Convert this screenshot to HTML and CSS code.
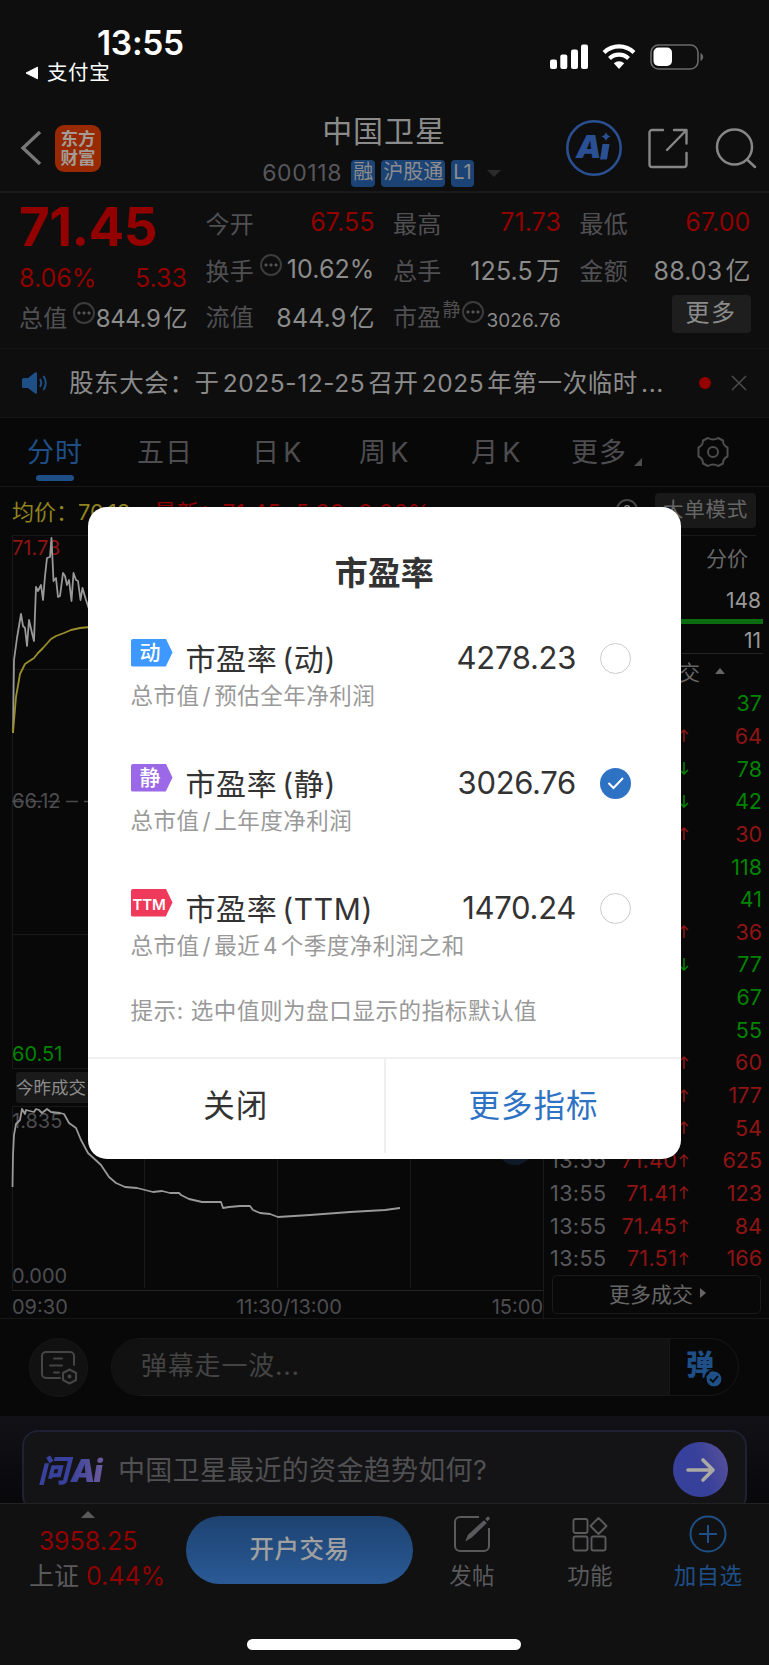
FILE: index.html
```html
<!DOCTYPE html>
<html lang="zh-CN">
<head>
    <meta charset="UTF-8">
    <meta name="viewport" content="width=device-width, initial-scale=1.0">
    <title>中国卫星 600118</title>
    <link rel="stylesheet" href="styles.css">
</head>
<body>
    <div class="phone">
        <div class="status">
            <div class="status-left">
                <div class="time">13:55</div>
                <div class="back-app">
                    <svg width="14" height="14" viewBox="0 0 14 14"><path d="M1 7 12.500 1.200v11.600z" fill="#fff" stroke="#fff" stroke-linejoin="round"/></svg>
                    <span>支付宝</span>
                </div>
            </div>
            <svg class="status-icons" width="154" height="26" viewBox="0 0 154 26">
                <g fill="#fff">
                    <rect x="0" y="15.500" width="7" height="9.500" rx="2"/>
                    <rect x="10.300" y="10.500" width="7" height="14.500" rx="2"/>
                    <rect x="21" y="5.500" width="7" height="19.500" rx="2"/>
                    <rect x="31" y="0.500" width="7" height="24.500" rx="2"/>
                    <path d="M69 25 63.800 19.300a7.500 7.500 0 0 1 10.400 0z"/>
                </g>
                <g fill="none" stroke="#fff" stroke-width="4.200">
                    <path d="M54 8.500a21.500 21.500 0 0 1 30 0"/>
                    <path d="M59.500 14.500a13.700 13.700 0 0 1 19 0"/>
                </g>
                <rect x="101" y="1" width="47" height="24" rx="7.500" fill="none" stroke="#6a6a6a" stroke-width="1.600"/>
                <rect x="103.500" y="3.500" width="18.500" height="18.500" rx="5" fill="#fff"/>
                <path d="M150.500 9v8c3.500-1.500 3.500-6.500 0-8z" fill="#6a6a6a"/>
            </svg>
        </div>

        <div class="header">
            <div class="header-left">
                <svg width="22" height="36" viewBox="0 0 22 36"><path d="M20 2 3 18l17 16" fill="none" stroke="#777" stroke-width="3.400"/></svg>
                <div class="logo"><span>东方</span><span>财富</span></div>
            </div>
            <div class="header-title">
                <div class="name">中国卫星</div>
                <div class="code">
                    <span class="num">600118</span>
                    <span class="tag">融</span>
                    <span class="tag">沪股通</span>
                    <span class="tag">L1</span>
                    <i class="down"></i>
                </div>
            </div>
            <div class="header-right">
                <svg width="56" height="56" viewBox="0 0 56 56">
                    <circle cx="28" cy="28" r="26.700" fill="none" stroke="#2a4f92" stroke-width="2.600"/>
                    <text x="10" y="38" class="ai-text">A</text>
                    <path d="M36.500 24h7l-2.500 15.500h-7zM40 12q1 3.500 4.500 4.500-3.500 1-4.500 4.500-1-3.500-4.500-4.500 3.500-1 4.500-4.500z" fill="#2a4f92"/>
                </svg>
                <svg width="41" height="41" viewBox="0 0 41 41" fill="none" stroke="#868686" stroke-width="2.400" stroke-linecap="round" stroke-linejoin="round"><path d="M15 2H4a2.500 2.500 0 0 0-2.500 2.500v32A2.500 2.500 0 0 0 4 39h32a2.500 2.500 0 0 0 2.500-2.500V25M26 2h12.500v13.500M38 2.500 19 22"/></svg>
                <svg width="42" height="42" viewBox="0 0 42 42" fill="none" stroke="#868686" stroke-width="2.500" stroke-linecap="round"><circle cx="19.500" cy="20" r="17.500"/><path d="m32 32.500 8 7.500"/></svg>
            </div>
        </div>

        <div class="quote">
            <div class="col">
                <div class="price">71.45</div>
                <div class="row change red"><span>8.06%</span><span>5.33</span></div>
                <div class="row cap"><label>总值</label><i class="dots"></i><b>844.9亿</b></div>
            </div>
            <div class="col">
                <div class="row"><label>今开</label><b class="red">67.55</b></div>
                <div class="row"><label>换手</label><i class="dots"></i><b>10.62%</b></div>
                <div class="row"><label>流值</label><b>844.9亿</b></div>
            </div>
            <div class="col">
                <div class="row"><label>最高</label><b class="red">71.73</b></div>
                <div class="row"><label>总手</label><b>125.5万</b></div>
                <div class="row pe"><label>市盈<sup>静</sup></label><i class="dots"></i><b>3026.76</b></div>
            </div>
            <div class="col">
                <div class="row"><label>最低</label><b class="red">67.00</b></div>
                <div class="row"><label>金额</label><b>88.03亿</b></div>
                <div class="row"><span class="more">更多</span></div>
            </div>
        </div>

        <div class="notice">
            <svg width="26" height="22" viewBox="0 0 26 22"><path d="M0 7.500Q0 6 1.500 6H6l7-5.500q2-1 2 1v19q0 2-2 1L6 16H1.500Q0 16 0 14.500z" fill="#1f4f87"/><path d="M18 7q2.500 4 0 8M21.500 4q4.500 7 0 14" fill="none" stroke="#1f4f87" stroke-width="2"/></svg>
            <p>股东大会：于2025-12-25召开2025年第一次临时...</p>
            <i class="red-dot"></i>
            <svg width="16" height="16" viewBox="0 0 16 16"><path d="m1 1 14 14M15 1 1 15" stroke="#4c4c4c" stroke-width="1.500"/></svg>
        </div>

        <div class="tabs">
            <span class="active">分时</span>
            <span>五日</span>
            <span>日K</span>
            <span>周K</span>
            <span>月K</span>
            <span>更多<i></i></span>
            <svg width="34" height="32" viewBox="-17 -16 34 32" fill="none" stroke="#4d4d50" stroke-width="2"><circle r="5"/><path stroke-linejoin="round" d="M-5-14Q0-11 5-14L10-11.500Q10-6.500 14.500-4.500V4.500Q10 6.500 10 11.500L5 14Q0 11-5 14L-10 11.500Q-10 6.500-14.500 4.500V-4.500Q-10-6.500-10-11.500z"/></svg>
        </div>

        <div class="market">
            <div class="legend">
                <span class="avg">均价：70.18</span>
                <span class="last">最新：71.45&nbsp; 5.33&nbsp; 8.06%</span>
                <i class="info">?</i>
                <span class="mode">大单模式</span>
            </div>
            <div class="panels">
                <svg class="chart" width="545" height="786" viewBox="0 533 545 786">
                    <g stroke="#191919" stroke-width="1" fill="none">
                        <path d="M12 535.500H543M12.500 535V1068.500H543M12 669.500H543M12 934.500H543M543.500 535V1318M144.500 535V1068M277.500 535V1068M410.500 535V1068"/>
                        <path d="M12 1106.500H543M12.500 1106V1290M144.500 1106V1288M277.500 1106V1288M410.500 1106V1288"/>
                        <path d="M12 1290.500H543" stroke="#242424"/>
                    </g>
                    <path d="M12 801.500H543" stroke="#4a4a4d" stroke-width="1.500" stroke-dasharray="12 6"/>
                    <text x="12" y="555" class="red">71.73</text>
                    <text x="12" y="808">66.12</text>
                    <text x="12" y="1061" class="green">60.51</text>
                    <rect x="16" y="1072" width="90" height="31" rx="3" fill="#1a1a1a"/>
                    <text x="16" y="1094" class="pick">今昨成交</text>
                    <text x="12" y="1128">1.835</text>
                    <text x="12" y="1283">0.000</text>
                    <text x="12" y="1314">09:30</text>
                    <text x="289" y="1314" text-anchor="middle">11:30/13:00</text>
                    <text x="543" y="1314" text-anchor="end">15:00</text>
                    <circle cx="515" cy="1147" r="18" fill="#0e1a28"/>
                    <polyline class="line-price" points="13,733 14,660 17,638 21,614 23,626 25,628 27,646 29,620 32,633 34,641 36,587 38,591 41,585 43,600 45,576 47,558 50,557 51.500,538 53.500,581 56,578 58,597 60,596 63,573 65,576 67,585 69,580 71.500,601 73.500,573 76,580 78,581 80.500,600 82.500,588 86,600 90,612"/>
                    <polyline class="line-avg" points="13,733 16,697 20,674 25,664 34,658 38,653 43,648 51,639 56,636 64,633 71,630 80,628 90,627"/>
                    <polyline class="line-price" points="12.500,1187 13,1155 14,1135 16,1124 20,1120 22,1109 25,1114 26,1110 34,1112 36,1109 39,1110 42,1113 47,1109 51,1112 60,1113 64,1114 69,1123 76,1128 81,1140 88,1153 101,1165 109,1177 116,1183 125,1187 137,1188 153,1192 162,1191 170,1193 179,1193 181,1195 189,1199 202,1202 221,1202 223,1208 229,1207 240,1206 250,1206 253,1210 260,1213 270,1214 278,1217 310,1215 350,1212 385,1210 400,1208"/>
                </svg>
                <div class="deals">
                    <div class="deals-tab">分价</div>
                    <div class="sell">148</div>
                    <div class="bar"></div>
                    <div class="buy">11</div>
                    <div class="deals-head"><span>成交</span><i></i></div>
                    <ul id="deals"></ul>
                    <div class="deals-more">更多成交<i></i></div>
                </div>
            </div>
        </div>

        <div class="danmu">
            <div class="danmu-set">
                <svg width="37" height="34" viewBox="0 0 37 34" fill="none" stroke="#454545" stroke-width="2" stroke-linecap="round" stroke-linejoin="round"><path d="M19 27H5a4 4 0 0 1-4-4V5a4 4 0 0 1 4-4h24a4 4 0 0 1 4 4v9M13 7.500h8M9 14.500h12M13 21.500h5"/><path d="m28.500 18.500 6.500 3.500v7l-6.500 3.500L22 29v-7z"/><circle cx="28.500" cy="25.500" r="1" fill="#454545"/></svg>
            </div>
            <div class="danmu-box">
                <div class="danmu-input">弹幕走一波...</div>
                <div class="danmu-switch">弹
                    <svg width="16" height="16" viewBox="0 0 16 16"><circle cx="8" cy="8" r="7.500" fill="#1f4f87"/><path d="m4 8 3 3 5-6" fill="none" stroke="#080808" stroke-width="1.800"/></svg>
                </div>
            </div>
        </div>

        <div class="ask">
            <div class="ask-box">
                <div class="ask-logo">问Ai</div>
                <p>中国卫星最近的资金趋势如何?</p>
                <div class="go">
                    <svg width="30" height="26" viewBox="0 0 30 26" fill="none" stroke="#aaa9a4" stroke-width="3.600" stroke-linecap="round" stroke-linejoin="round"><path d="M2 13h24M17 3l10 10-10 10"/></svg>
                </div>
            </div>
        </div>

        <div class="bottom">
            <div class="index">
                <i class="up"></i>
                <div class="red">3958.25</div>
                <div>上证 <span class="red">0.44%</span></div>
            </div>
            <div class="open">开户交易</div>
            <div class="nav">
                <svg width="36" height="36" viewBox="0 0 36 36" fill="none" stroke="#5a5a5d" stroke-width="2"><path d="M25 1H6a5 5 0 0 0-5 5v24a5 5 0 0 0 5 5h24a5 5 0 0 0 5-5V12"/><path d="m12.500 24 2-5L30 5l2 2-14.500 14zM32 3l2-2 1.500 1.500-2 2z" fill="#5a5a5d" stroke-width="1.200"/></svg>
                <span>发帖</span>
            </div>
            <div class="nav">
                <svg width="36" height="36" viewBox="0 0 36 36" fill="none" stroke="#5a5a5d" stroke-width="1.900"><rect x="1.500" y="3" width="14" height="14" rx="2"/><rect x="1.500" y="20.500" width="14" height="14" rx="2"/><rect x="19.500" y="20.500" width="14" height="14" rx="2"/><path stroke-linejoin="round" d="m26.500 2 8 8-8 8-8-8z"/></svg>
                <span>功能</span>
            </div>
            <div class="nav blue">
                <svg width="38" height="38" viewBox="0 0 38 38" fill="none" stroke="#1f4f87" stroke-width="2"><circle cx="19" cy="19" r="17.500"/><path d="M19 10v18M10 19h18"/></svg>
                <span>加自选</span>
            </div>
            <div class="home"></div>
        </div>

        <div class="modal">
            <h2>市盈率</h2>
            <div class="option">
                <div class="badge"><em>动</em></div>
                <div class="option-name">市盈率<span>(动)</span></div>
                <div class="value">4278.23</div>
                <div class="radio"></div>
                <div class="desc">总市值<i>/</i>预估全年净利润</div>
            </div>
            <div class="option">
                <div class="badge purple"><em>静</em></div>
                <div class="option-name">市盈率<span>(静)</span></div>
                <div class="value">3026.76</div>
                <div class="radio checked"><svg width="18" height="14" viewBox="0 0 18 14"><path d="m1.500 7 5 5L16 2" fill="none" stroke="#fff" stroke-width="2"/></svg></div>
                <div class="desc">总市值<i>/</i>上年度净利润</div>
            </div>
            <div class="option">
                <div class="badge pink"><em class="ttm">TTM</em></div>
                <div class="option-name">市盈率<span>(TTM)</span></div>
                <div class="value">1470.24</div>
                <div class="radio"></div>
                <div class="desc">总市值<i>/</i>最近4个季度净利润之和</div>
            </div>
            <p class="tip">提示: 选中值则为盘口显示的指标默认值</p>
            <div class="actions">
                <div>关闭</div>
                <div class="blue">更多指标</div>
            </div>
        </div>
    </div>
    <script>
        // [price, direction, volume, colour]
        let deals = [
            ['71.45', '', 37, 'g'], ['71.46', '↑', 64, 'r'], ['71.45', '↓', 78, 'g'],
            ['71.43', '↓', 42, 'g'], ['71.45', '↑', 30, 'r'], ['71.45', '', 118, 'g'],
            ['71.45', '', 41, 'g'], ['71.46', '↑', 36, 'r'], ['71.44', '↓', 77, 'g'],
            ['71.44', '', 67, 'g'], ['71.44', '', 55, 'g'], ['71.45', '↑', 60, 'r'],
            ['71.46', '↑', 177, 'r'], ['71.47', '↑', 54, 'r'], ['71.40', '↑', 625, 'r'],
            ['71.41', '↑', 123, 'r'], ['71.45', '↑', 84, 'r'], ['71.51', '↑', 166, 'r']
        ]
        let arrows = {
            '↑': '<svg width="10" height="13" viewBox="0 0 10 13"><path d="M5 13V1M1 5l4-4 4 4"/></svg>',
            '↓': '<svg width="10" height="13" viewBox="0 0 10 13"><path d="M5 0v12M1 8l4 4 4-4"/></svg>',
            '': ''
        }
        document.getElementById('deals').innerHTML = deals.map((d) =>
            `<li class="${d[3]}"><span>13:55</span><b>${d[0]}</b><i>${arrows[d[1]]}</i><em>${d[2]}</em></li>`
        ).join('')
    </script>
</body>
</html>
```

FILE: styles.css
```css
* {
    box-sizing: border-box;
}

body {
    margin: 0;
    background-color: #080808;
    color: #8b8b8b;
    font-family: Inter, "Noto Sans CJK SC", sans-serif;
    text-autospace: normal;
}

p, h2, ul {
    margin: 0;
    padding: 0;
}

i, em, b {
    font-style: normal;
    font-weight: 400;
}

svg {
    display: block;
    flex: none;
}

.phone {
    position: relative;
    width: 769px;
    height: 1665px;
    overflow: hidden;
    white-space: nowrap;
}

.red {
    color: #920000;
}

.blue {
    color: #1f4f87;
}

/* status bar */
.status {
    height: 108px;
    background-color: #0e0e0e;
    display: flex;
    justify-content: space-between;
    padding: 25px 66px 0 25px;
    color: #fff;
}

.time {
    font-size: 33.5px;
    font-weight: 600;
    line-height: 37px;
    padding-left: 72px;
    letter-spacing: -0.3px;
}

.back-app {
    display: flex;
    align-items: center;
    gap: 8px;
    font-size: 20.5px;
    line-height: 21px;
    letter-spacing: 0.6px;
}

.status-icons {
    margin: 19px -1px 0 0;
}

/* header */
.header {
    height: 85px;
    background-color: #0e0e0e;
    border-bottom: 2px solid #191919;
    display: flex;
    justify-content: space-between;
    padding: 0 12px 0 20px;
}

.header-left {
    display: flex;
    align-items: center;
    gap: 13px;
    height: 80px;
}

.logo {
    width: 46px;
    height: 47px;
    border-radius: 9px;
    background-color: #982900;
    color: #a39c96;
    display: flex;
    flex-direction: column;
    justify-content: center;
    align-items: center;
    font-size: 17.5px;
    font-weight: 700;
    line-height: 19px;
    padding-bottom: 1px;
}

.header-title {
    padding: 4px 0 0 96px;
}

.name {
    font-size: 30px;
    line-height: 38px;
    letter-spacing: 0.9px;
    text-align: center;
    padding-left: 5px;
}

.code {
    display: flex;
    align-items: center;
    gap: 6px;
    margin-top: 9px;
    font-size: 23px;
    height: 28px;
    color: #57575b;
}

.code .num {
    margin-right: 3px;
    width: 80px;
    letter-spacing: 0.6px;
}

.tag {
    height: 27px;
    line-height: 25px;
    padding: 0 2px;
    border-radius: 4px;
    background-color: #1b4376;
    color: #8d8d8d;
    font-size: 20px;
}

.down {
    margin-left: 7px;
    border: 7px solid transparent;
    border-top-color: #2b2b2b;
    border-bottom: 0;
}

.header-right {
    display: flex;
    align-items: center;
    gap: 26px;
    height: 80px;
}

.ai-text {
    font-size: 32px;
    font-weight: 900;
    font-style: italic;
    fill: #2a4f92;
}

/* quote */
.quote {
    height: 156px;
    background-color: #0e0e0e;
    display: grid;
    grid-template-columns: 168px 169px 168px 171px;
    column-gap: 18.5px;
    padding: 6px 0 0 19px;
    border-bottom: 1px solid #161616;
    font-size: 24px;
}

.row {
    display: flex;
    align-items: center;
    justify-content: space-between;
    height: 46.8px;
}

.row label {
    color: #505053;
    letter-spacing: 0.2px;
}

.row b {
    font-size: 25px;
    letter-spacing: 0.1px;
}

.price {
    color: #920000;
    font-size: 53px;
    font-weight: 700;
    line-height: 56px;
    height: 60px;
    letter-spacing: -0.6px;
}

.row.change {
    height: 37px;
    font-size: 25px;
}

.row.cap {
    height: 41px;
}

.row.cap b {
    font-size: 24px;
    letter-spacing: -0.4px;
}

.dots {
    width: 22px;
    height: 22px;
    flex: none;
    border: 2px solid #3c3c3e;
    border-radius: 50%;
    margin: -8px auto 0 6px;
    background: radial-gradient(circle at 4px 9px, #555 1.3px, transparent 1.8px),
        radial-gradient(circle at 9px 9px, #555 1.3px, transparent 1.8px),
        radial-gradient(circle at 14px 9px, #555 1.3px, transparent 1.8px);
}

.pe sup {
    font-size: 18px;
    line-height: 0;
    vertical-align: 10px;
    margin-left: 1px;
}

.pe .dots {
    margin-left: 1px;
}

.row.pe b {
    font-size: 19px;
    padding-top: 9px;
}

.more {
    width: 79px;
    height: 38px;
    line-height: 36px;
    margin: 0 0 3px auto;
    border-radius: 4px;
    background-color: #1e1e1e;
    text-align: center;
    letter-spacing: 1.5px;
}

/* notice */
.notice {
    height: 69px;
    background-color: #0e0e0e;
    display: flex;
    align-items: center;
    padding: 0 22px 0 22px;
    border-bottom: 1px solid #161616;
}

.notice p {
    margin-left: 21px;
    padding-bottom: 3px;
    width: 625px;
    font-size: 24.5px;
    letter-spacing: 0.6px;
}

.red-dot {
    width: 12px;
    height: 12px;
    border-radius: 50%;
    background-color: #950000;
    margin: 0 20px 0 5px;
    flex: none;
}

/* tabs */
.tabs {
    height: 69px;
    border-bottom: 1px solid #161616;
    display: grid;
    grid-template-columns: 110px 115px 107px 112px 100px 125px 34px;
    align-items: center;
    padding-left: 27px;
    font-size: 27px;
    letter-spacing: 1px;
    color: #4d4d50;
}

.tabs span {
    position: relative;
    line-height: 70px;
    height: 68px;
}

.tabs .active {
    color: #1f4f87;
}

.tabs .active::after {
    content: "";
    position: absolute;
    left: 9px;
    bottom: 5px;
    width: 38px;
    height: 6px;
    border-radius: 3px;
    background-color: #1f4f87;
}

.tabs i {
    position: absolute;
    left: 63px;
    bottom: 20px;
    border: 4px solid #4d4d50;
    border-left-color: transparent;
    border-top-color: transparent;
}

/* chart and deals */
.market {
    height: 832px;
    border-bottom: 1px solid #161616;
}

.legend {
    height: 46px;
    display: flex;
    align-items: center;
    padding: 0 13px 0 12px;
    font-size: 22px;
}

.avg {
    color: #8f8420;
    width: 142px;
}

.last {
    color: #920000;
    letter-spacing: 0.8px;
}

.info {
    margin-left: auto;
    width: 22px;
    height: 22px;
    line-height: 19px;
    text-align: center;
    border: 2px solid #444;
    border-radius: 50%;
    font-size: 15px;
}

.mode {
    width: 101px;
    height: 35px;
    line-height: 33px;
    margin-left: 17px;
    border-radius: 4px;
    background-color: #191919;
    color: #666;
    font-size: 20.5px;
    letter-spacing: 0.7px;
    text-align: center;
}

.panels {
    display: flex;
}

.chart text {
    font-size: 20px;
    fill: #4d4d50;
}

.chart text.red {
    fill: #8f1414;
}

.chart text.green {
    fill: #008400;
}

.chart text.pick {
    font-size: 17.5px;
    fill: #8b8b8b;
}

.line-price, .line-avg {
    fill: none;
    stroke: #999;
    stroke-width: 1.8;
    stroke-linejoin: round;
}

.line-avg {
    stroke: #9a8f2a;
}

.deals {
    width: 218px;
    font-size: 21px;
    padding-left: 5px;
}

.deals-tab {
    height: 51px;
    line-height: 45px;
    padding-right: 8px;
    margin: 2px 7px 0 0;
    border-top: 1px solid #191919;
    text-align: right;
    color: #666;
}

.sell, .buy {
    height: 33px;
    line-height: 29px;
    text-align: right;
    padding-right: 2px;
    color: #999;
}

.bar {
    height: 5px;
    background-color: #0b6b0f;
}

.buy {
    height: 30px;
    line-height: 33px;
    border-bottom: 1px solid #242424;
}

.deals-head {
    height: 33px;
    display: flex;
    justify-content: flex-end;
    align-items: center;
    gap: 15px;
    padding-right: 38px;
    color: #666;
}

.deals-head i {
    border: 5px solid transparent;
    border-bottom: 6px solid #666;
    border-top: 0;
}

.deals ul {
    list-style: none;
}

.deals li {
    display: flex;
    align-items: center;
    height: 32.65px;
    padding-right: 1px;
    font-size: 21.5px;
}

.deals li span {
    color: #5a5a5e;
    width: 61px;
    letter-spacing: 0.4px;
}

.deals li b {
    width: 66px;
    text-align: right;
    letter-spacing: 0.3px;
}

.deals li i {
    width: 20px;
    padding-left: 2px;
}

.deals li em {
    margin-left: auto;
}

.deals li svg {
    fill: none;
    stroke: currentColor;
    stroke-width: 1.5;
}

.r {
    color: #8f1414;
}

.g {
    color: #008400;
}

.deals-more {
    width: 209px;
    height: 39px;
    margin-left: 2px;
    border: 1px solid #1a1a1a;
    border-radius: 5px;
    display: flex;
    align-items: center;
    justify-content: center;
    gap: 7px;
    color: #666;
    padding: 0 0 2px 2px;
}

.deals-more i {
    border: 5px solid transparent;
    border-left: 6px solid #666;
    border-right: 0;
}

/* danmu */
.danmu {
    height: 97px;
    display: flex;
    align-items: center;
    gap: 23px;
    padding: 2px 0 3px 29px;
}

.danmu-set {
    width: 59px;
    height: 59px;
    flex: none;
    border-radius: 50%;
    background-color: #111;
    border: 1px solid #171717;
    display: flex;
    align-items: center;
    justify-content: center;
    padding: 2px 0 0 2px;
}

.danmu-box {
    width: 628px;
    height: 58px;
    border: 1px solid #171717;
    border-radius: 29px;
    display: flex;
    overflow: hidden;
}

.danmu-input {
    width: 558px;
    background-color: #111;
    border-right: 1px solid #171717;
    padding-left: 29px;
    line-height: 53px;
    font-size: 26px;
    letter-spacing: 0.8px;
    color: #434343;
    text-autospace: no-autospace;
}

.danmu-switch {
    position: relative;
    padding-left: 16px;
    font-size: 28px;
    font-weight: 900;
    line-height: 53px;
    color: #1f4f87;
}

.danmu-switch svg {
    position: absolute;
    left: 36px;
    top: 32px;
    border-radius: 50%;
    outline: 2px solid #080808;
}

/* ask ai */
.ask {
    height: 87px;
    padding: 14px 22px 0;
    overflow: hidden;
    background: linear-gradient(#111117, #08080b);
}

.ask-box {
    width: 725px;
    height: 82px;
    border: 2px solid #202034;
    border-bottom-color: #2a2a2c;
    border-radius: 16px;
    background-color: #141416;
    display: flex;
    align-items: center;
    padding: 0 17px 3px 14px;
}

.ask-logo {
    width: 80px;
    font-size: 31px;
    font-weight: 900;
    font-style: italic;
    letter-spacing: -2px;
    color: transparent;
    background: linear-gradient(90deg, #38429c 40%, #6a5a9c 80%);
    background-clip: text;
    padding-bottom: 3px;
}

.ask-box p {
    font-size: 27px;
    letter-spacing: 0.3px;
    color: #505052;
    padding-bottom: 3px;
    text-autospace: no-autospace;
}

.go {
    width: 55px;
    height: 55px;
    margin-left: auto;
    border-radius: 50%;
    background: linear-gradient(70deg, #37409a 50%, #5b529a);
    display: flex;
    align-items: center;
    justify-content: center;
}

/* bottom bar */
.bottom {
    position: relative;
    height: 162px;
    background-color: #111;
    border-top: 1px solid #222;
    display: flex;
    color: #5a5a5d;
}

.index {
    width: 176px;
    padding: 7px 0 0;
    margin-right: 10px;
    text-align: center;
    font-size: 25px;
    line-height: 35px;
}

.index .up {
    display: block;
    width: 14px;
    margin: 0 auto 6px;
    border: 7px solid transparent;
    border-top: 0;
    border-bottom-color: #5a5a5d;
}

.index div:last-child {
    padding-left: 18px;
}

.open {
    width: 227px;
    height: 68px;
    margin-top: 12px;
    border-radius: 34px;
    background: linear-gradient(#1d4270, #2a5a96);
    color: #a0a0a0;
    font-size: 24.5px;
    font-weight: 500;
    letter-spacing: 0.5px;
    line-height: 67px;
    text-align: center;
}

.nav {
    width: 118px;
    display: flex;
    flex-direction: column;
    align-items: center;
    padding-top: 12px;
    font-size: 22.5px;
    letter-spacing: 0.3px;
}

.nav span {
    line-height: 34px;
    margin-top: 7px;
}

.nav.blue svg {
    margin: -1px 0;
}

.home {
    position: absolute;
    left: 247px;
    bottom: 15px;
    width: 274px;
    height: 11px;
    border-radius: 6px;
    background-color: #fff;
}

/* modal */
.modal {
    position: absolute;
    left: 87.5px;
    top: 506.5px;
    width: 593.5px;
    height: 652px;
    border-radius: 19px;
    background-color: #fff;
    color: #333;
    overflow: hidden;
}

.modal h2 {
    height: 128px;
    line-height: 133px;
    font-size: 33px;
    font-weight: 700;
    text-align: center;
}

.option {
    display: grid;
    grid-template-columns: 55px 1fr auto 54px;
    grid-template-rows: 48px 28px;
    height: 125px;
    padding: 0 50px 0 43px;
    align-items: center;
}

.badge {
    align-self: start;
    width: 42px;
    height: 28px;
    margin-top: 4px;
    border-radius: 2px;
    background-color: #3d99ff;
    clip-path: polygon(0 0, 84% 0, 100% 50%, 84% 100%, 0 100%);
    color: #fff;
    font-size: 21px;
    line-height: 27px;
    padding-left: 9px;
}

.badge em {
    font-weight: 500;
}

.badge .ttm {
    font-size: 15px;
    font-weight: 600;
    margin-left: -7px;
    letter-spacing: -0.2px;
}

.purple {
    background-color: #9b69e8;
}

.pink {
    background-color: #f03a5b;
}

.option-name {
    font-size: 30px;
    letter-spacing: 0.6px;
    padding-bottom: 4px;
}

.option-name span {
    margin-left: 5px;
}

.value {
    font-size: 31px;
    letter-spacing: -0.3px;
    padding: 0 1px 2px 0;
}

.radio {
    justify-self: end;
    width: 31px;
    height: 31px;
    margin-bottom: 1px;
    border: 1.5px solid #ccc;
    border-radius: 50%;
}

.checked {
    border: 0;
    background-color: #2e72c4;
    display: flex;
    align-items: center;
    justify-content: center;
}

.desc {
    grid-column: 1 / -1;
    font-size: 22.5px;
    letter-spacing: 0.5px;
    color: #999;
    padding-bottom: 5px;
}

.desc i {
    margin: 0 3px;
}

.tip {
    height: 47px;
    padding-left: 43px;
    font-size: 22.5px;
    letter-spacing: 0.6px;
    line-height: 2px;
    color: #999;
    text-autospace: no-autospace;
}

.actions {
    display: flex;
    border-top: 2px solid #f0f0f0;
    height: 102px;
}

.actions div {
    width: 50%;
    height: 94px;
    line-height: 94px;
    font-size: 31.5px;
    letter-spacing: 1px;
    text-align: center;
}

.actions .blue {
    color: #2e72c4;
    border-left: 2px solid #f0f0f0;
}
```
